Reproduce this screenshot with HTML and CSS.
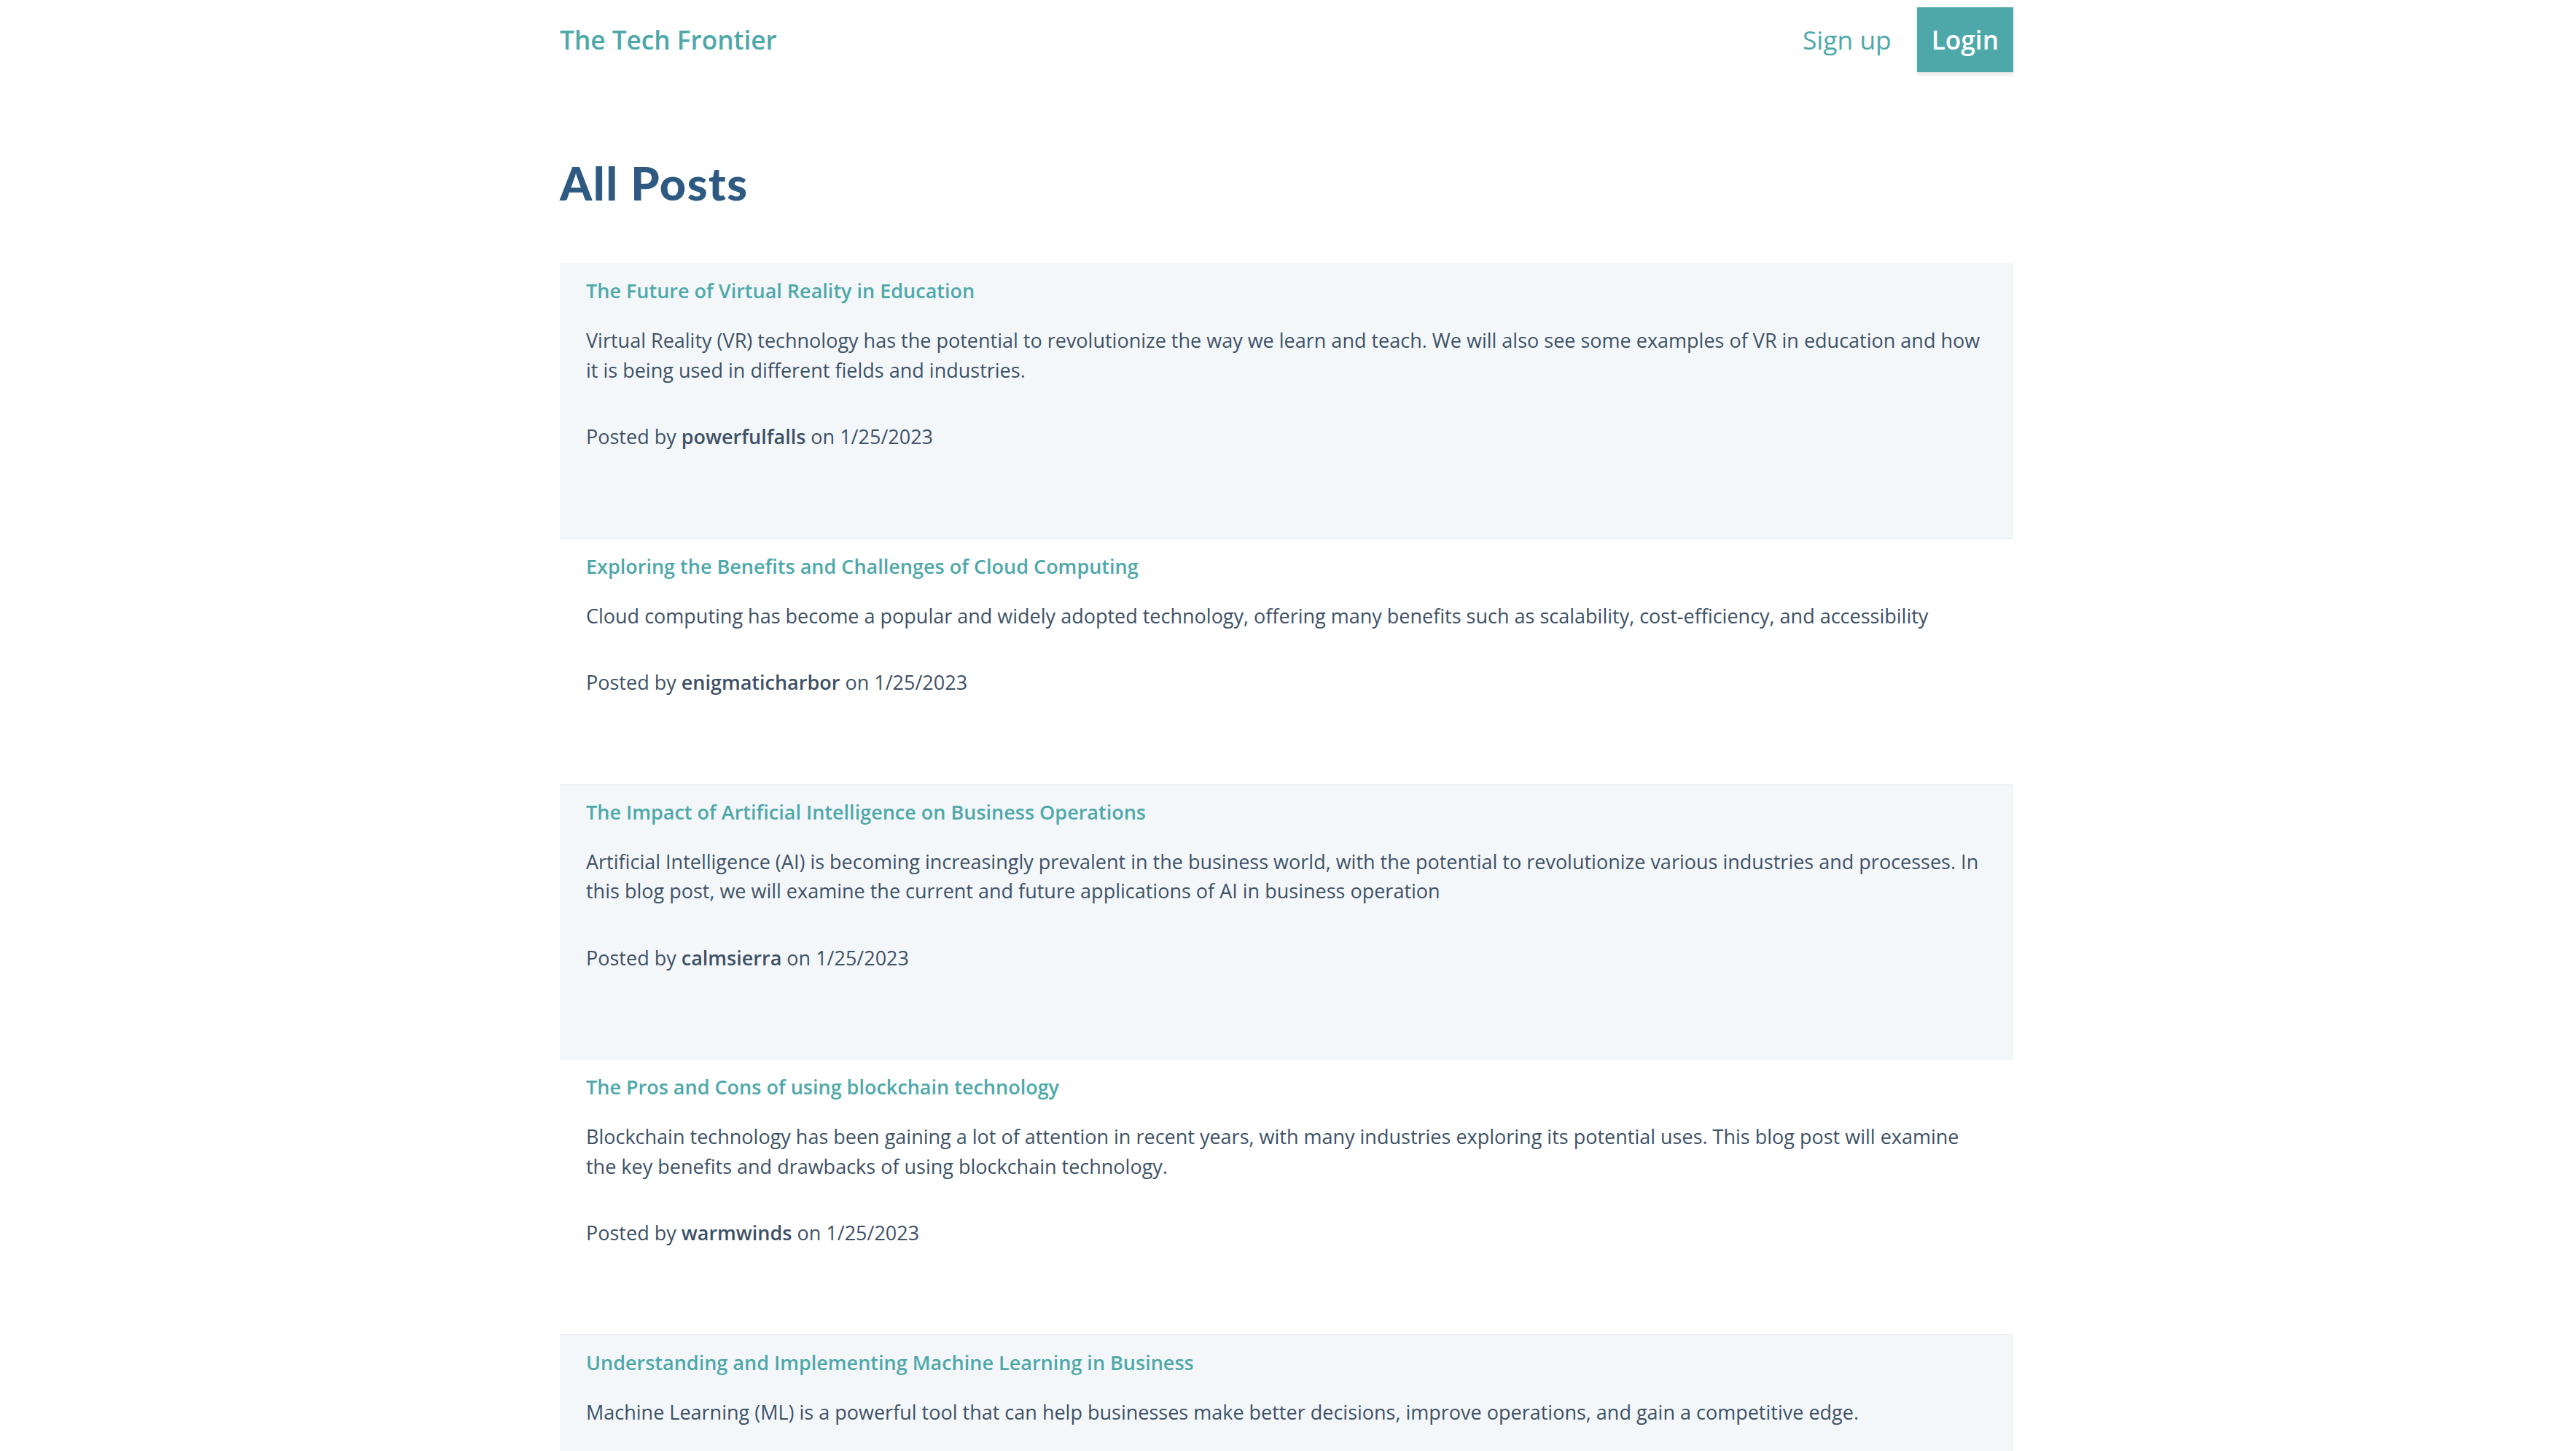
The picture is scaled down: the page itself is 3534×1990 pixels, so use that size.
FILE: index.html
```html
<!DOCTYPE html>
<html lang="en">
<head>
<meta charset="utf-8">
<title>The Tech Frontier</title>
<link rel="stylesheet" href="styles.css">
</head>
<body>
<div class="page">
  <header class="topbar">
    <a class="brand" href="#">The Tech Frontier</a>
    <nav class="nav">
      <a class="nav-link" href="#">Sign up</a>
      <a class="btn-login" href="#">Login</a>
    </nav>
  </header>

  <main>
    <h1 class="page-title">All Posts</h1>

    <section class="posts">
      <article class="post">
        <a class="post-title" href="#">The Future of Virtual Reality in Education</a>
        <p class="post-excerpt">Virtual Reality (VR) technology has the potential to revolutionize the way we learn and teach. We will also see some examples of VR in education and how it is being used in different fields and industries.</p>
        <p class="post-meta">Posted by <strong>powerfulfalls</strong> on 1/25/2023</p>
      </article>
      <article class="post">
        <a class="post-title" href="#">Exploring the Benefits and Challenges of Cloud Computing</a>
        <p class="post-excerpt">Cloud computing has become a popular and widely adopted technology, offering many benefits such as scalability, cost-efficiency, and accessibility</p>
        <p class="post-meta">Posted by <strong>enigmaticharbor</strong> on 1/25/2023</p>
      </article>
      <article class="post">
        <a class="post-title" href="#">The Impact of Artificial Intelligence on Business Operations</a>
        <p class="post-excerpt">Artificial Intelligence (AI) is becoming increasingly prevalent in the business world, with the potential to revolutionize various industries and processes. In this blog post, we will examine the current and future applications of AI in business operation</p>
        <p class="post-meta">Posted by <strong>calmsierra</strong> on 1/25/2023</p>
      </article>
      <article class="post">
        <a class="post-title" href="#">The Pros and Cons of using blockchain technology</a>
        <p class="post-excerpt">Blockchain technology has been gaining a lot of attention in recent years, with many industries exploring its potential uses. This blog post will examine the key benefits and drawbacks of using blockchain technology.</p>
        <p class="post-meta">Posted by <strong>warmwinds</strong> on 1/25/2023</p>
      </article>
      <article class="post">
        <a class="post-title" href="#">Understanding and Implementing Machine Learning in Business</a>
        <p class="post-excerpt">Machine Learning (ML) is a powerful tool that can help businesses make better decisions, improve operations, and gain a competitive edge.</p>
        <p class="post-meta">Posted by <strong>powerfulfalls</strong> on 1/25/2023</p>
      </article>
    </section>
  </main>
</div>
</body>
</html>
```

FILE: styles.css
```css
html, body {
  margin: 0;
  padding: 0;
  background: #ffffff;
}

body {
  font-family: "Open Sans", "Liberation Sans", sans-serif;
  color: #3d5166;
}

.page {
  width: 1994px;
  margin: 0 0 0 768px;
}

.topbar {
  display: flex;
  align-items: center;
  justify-content: space-between;
  padding-top: 10px;
}

.brand {
  font-size: 35.2px;
  font-weight: 600;
  color: #4ea8aa;
  text-decoration: none;
  line-height: 49px;
}

.nav {
  display: flex;
  align-items: center;
  gap: 35px;
}

.nav-link {
  font-size: 35.4px;
  font-weight: 400;
  color: #4ea8aa;
  text-decoration: none;
  line-height: 49px;
}

.btn-login {
  display: block;
  font-size: 35.2px;
  font-weight: 600;
  line-height: 49px;
  color: #ffffff;
  background: #4ea8aa;
  padding: 20px 20px;
  text-decoration: none;
  box-shadow: 0 3px 6px rgba(0, 0, 0, 0.12);
}

.page-title {
  font-family: "Lato", "Open Sans", sans-serif;
  font-weight: 900;
  font-size: 63px;
  letter-spacing: 1.5px;
  line-height: 76px;
  color: #2e5a82;
  margin: 114px 0 0;
}

.posts {
  margin-top: 72px;
}

.post {
  padding: 18px 36px 118px;
  border-bottom: 1px solid #e7ecf0;
  background: #ffffff;
}

.post:nth-child(odd) {
  background: #f4f7fa;
}

.post-title {
  display: block;
  font-size: 27px;
  font-weight: 600;
  line-height: 40px;
  color: #4ea8aa;
  text-decoration: none;
}

.post-excerpt {
  font-size: 27px;
  line-height: 40.5px;
  margin: 28px 0 0;
}

.post-meta {
  font-size: 27px;
  line-height: 40.5px;
  margin: 51px 0 0;
}

.post-meta strong {
  font-weight: 600;
}
```
